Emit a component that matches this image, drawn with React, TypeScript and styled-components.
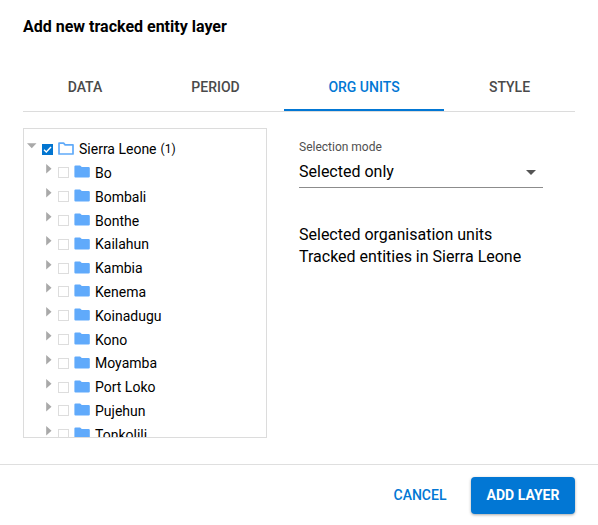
import React from "react";
import styled, { createGlobalStyle } from "styled-components";

const GlobalStyle = createGlobalStyle`
  * { box-sizing: border-box; }
  body { margin: 0; background: #fff; font-family: Roboto, sans-serif; color: #000; }
  button { font-family: inherit; border: 0; background: none; padding: 0; }
`;

const Dialog = styled.section`
  display: flex;
  flex-direction: column;
  width: 598px;
  height: 525px;
  overflow: hidden;
  background: #fff;
`;

const Title = styled.h1`
  margin: 0;
  height: 63px;
  padding: 16px 23px 0;
  font-size: 16px;
  line-height: 22px;
  font-weight: 700;
  white-space: nowrap;
`;

const Tabs = styled.nav`
  display: flex;
  height: 49px;
  margin: 0 23px;
  border-bottom: 1px solid #dcdcdc;
`;

const Tab = styled.button<{ $width: number; $active?: boolean }>`
  width: ${(p) => p.$width}px;
  height: 48px;
  padding-top: 2px;
  border-bottom: 2px solid ${(p) => (p.$active ? "#0277d4" : "transparent")};
  color: ${(p) => (p.$active ? "#0277d4" : "#4a4a4a")};
  font-size: 14px;
  font-weight: 500;
`;

const Content = styled.div`
  display: flex;
  align-items: flex-start;
  gap: 32px;
  height: 352px;
  padding: 16px 23px 0;
`;

const Tree = styled.div`
  width: 244px;
  height: 310px;
  padding: 8.25px 0 0 3px;
  border: 1px solid #dcdcdc;
  overflow: hidden;
`;

const Children = styled.div`
  padding-left: 16px;
`;

const Row = styled.div`
  display: flex;
  align-items: center;
  height: 23.8px;
  font-size: 14px;
  white-space: nowrap;
`;

const Arrow = styled.svg`
  width: 10px;
  height: 10px;
  flex: none;
  margin: 0 5px 7px 0;
  fill: #a9a9a9;
`;

const Box = styled.span<{ $checked?: boolean }>`
  display: flex;
  flex: none;
  width: 11px;
  height: 11px;
  margin: 0 5px 0 0;
  border: 1px solid ${(p) => (p.$checked ? "#0275d0" : "#dddddd")};
  background: ${(p) => (p.$checked ? "#0275d0" : "#fff")};
  svg { width: 9px; height: 9px; }
`;

const Folder = styled.svg`
  width: 16px;
  height: 13px;
  flex: none;
  margin: 0 5px 2px 0;
`;

const Count = styled.span`
  margin-left: 4px;
  font-size: 12px;
`;

const Settings = styled.div`
  width: 244px;
  padding-top: 11px;
`;

const FieldLabel = styled.div`
  font-size: 12px;
  line-height: 16px;
  color: #505050;
`;

const Select = styled.div`
  display: flex;
  align-items: center;
  justify-content: space-between;
  height: 33px;
  padding: 1px 7px 0 0;
  border-bottom: 1px solid #8c8c8c;
  font-size: 16px;
  svg { width: 10px; height: 5px; fill: #555; margin-top: 1px; }
`;

const Summary = styled.div`
  margin-top: 36px;
  font-size: 16px;
  line-height: 22px;
  white-space: nowrap;
`;

const Footer = styled.footer`
  display: flex;
  justify-content: flex-end;
  height: 61px;
  padding: 12px 23px 0 0;
  border-top: 1px solid #dfdfdf;
`;

const Action = styled.button<{ $primary?: boolean }>`
  width: ${(p) => (p.$primary ? 104 : 102)}px;
  height: 37px;
  padding-bottom: 1px;
  border-radius: 4px;
  font-size: 14px;
  font-weight: ${(p) => (p.$primary ? 700 : 500)};
  color: ${(p) => (p.$primary ? "#fff" : "#0277d4")};
  background: ${(p) => (p.$primary ? "#0277d4" : "transparent")};
  box-shadow: ${(p) => (p.$primary ? "0 1px 3px rgba(0,0,0,.35)" : "none")};
`;

const districts = [
  "Bo", "Bombali", "Bonthe", "Kailahun", "Kambia", "Kenema",
  "Koinadugu", "Kono", "Moyamba", "Port Loko", "Pujehun", "Tonkolili",
];

const TreeRow = ({ name, root }: { name: string; root?: boolean }) => (
  <Row>
    <Arrow viewBox="0 0 10 10">
      {root ? <path d="M0 2.2h9.5L4.75 7.2z" /> : <path d="M3.2 0v9.5L8.5 4.7z" />}
    </Arrow>
    <Box $checked={root}>
      {root && (
        <svg viewBox="0 0 9 9" fill="none" stroke="#fff" strokeWidth="1.4">
          <path d="M1 4.7l2.3 2.2L8 1.9" />
        </svg>
      )}
    </Box>
    <Folder viewBox="0 0 16 13">
      {root ? (
        <path
          d="M1 12V1.2h4.6l1.5 1.6H15V12z"
          fill="#fff"
          stroke="#60aaf9"
          strokeWidth="1.7"
          strokeLinejoin="round"
        />
      ) : (
        <path d="M1.5 .4h4.6l1.7 1.6h6.8q1.2 0 1.2 1v8.6q0 1-1.2 1H1.5Q.4 12.6.4 11.6V1.4Q.4.4 1.5.4z" fill="#60aafb" />
      )}
    </Folder>
    <span>{name}</span>
    {root && <Count>(1)</Count>}
  </Row>
);

export default function App() {
  return (
    <>
      <GlobalStyle />
      <Dialog>
        <Title>Add new tracked entity layer</Title>
        <Tabs>
          <Tab $width={124}>DATA</Tab>
          <Tab $width={137}>PERIOD</Tab>
          <Tab $width={160} $active>ORG UNITS</Tab>
          <Tab $width={131}>STYLE</Tab>
        </Tabs>
        <Content>
          <Tree>
            <TreeRow name="Sierra Leone" root />
            <Children>
              {districts.map((d) => <TreeRow key={d} name={d} />)}
            </Children>
          </Tree>
          <Settings>
            <FieldLabel>Selection mode</FieldLabel>
            <Select>
              Selected only
              <svg viewBox="0 0 10 5"><path d="M0 0h10L5 5z" /></svg>
            </Select>
            <Summary>
              <div>Selected organisation units</div>
              <div>Tracked entities in Sierra Leone</div>
            </Summary>
          </Settings>
        </Content>
        <Footer>
          <Action>CANCEL</Action>
          <Action $primary>ADD LAYER</Action>
        </Footer>
      </Dialog>
    </>
  );
}
